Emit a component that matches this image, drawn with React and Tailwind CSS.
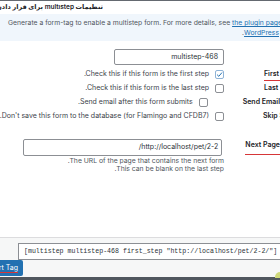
const font = "font-['Inter','DejaVu_Sans',sans-serif]";

const steps = [
  { text: ".Check this if this form is the first step", label: "First", pad: "pl-[40px]", checked: true, mark: true },
  { text: ".Check this if this form is the last step", label: "Last", pad: "pl-[40px]" },
  { text: ".Send email after this form submits", label: "Send Email", pad: "pl-[35px]" },
  { text: ".Don't save this form to the database (for Flamingo and CFDB7)", label: "Skip Save", pad: "pl-[39px]" },
];

const CheckBox = ({ checked }) => (
  <span
    className={`flex h-[9px] w-[9px] shrink-0 items-center justify-center rounded-[2px] border bg-white ${
      checked ? "border-[#8fb3d6]" : "border-[#8c8f94]"
    }`}
  >
    {checked && (
      <svg viewBox="0 0 10 10" className="h-[7px] w-[7px]">
        <path d="M1.5 5.2 L4 7.6 L8.6 2.2" fill="none" stroke="#2271b1" strokeWidth="1.4" />
      </svg>
    )}
  </span>
);

export default function App() {
  return (
    <div className={`relative flex h-[280px] w-[280px] flex-col overflow-hidden bg-white ${font}`}>
      {/* Modal title */}
      <div className="h-px shrink-0 bg-[#646970]" />
      <div className="flex h-[13px] shrink-0 items-center">
        <div
          dir="rtl"
          className="w-[103px] overflow-hidden whitespace-nowrap text-[6.5px] font-semibold leading-none text-[#1d2327]"
        >
          تنظیمات multistep برای قرار دادن در فرم
        </div>
      </div>

      {/* Notice */}
      <div className="flex h-[27px] shrink-0 flex-col bg-[#f0f6fc] pt-[4px] text-[6.8px] leading-[10px] text-[#50575e]">
        <p className="whitespace-nowrap pl-[8px]">
          Generate a form-tag to enable a multistep form. For more details, see{" "}
          <span className="text-[#2271b1] underline">the plugin page</span>
        </p>
        <p className="whitespace-nowrap pr-px text-right">
          .<span className="text-[#2271b1] underline">WordPress</span>
        </p>
      </div>

      {/* Fields */}
      <div className="flex h-[196px] shrink-0 flex-col pt-[8px] text-[7px] text-[#3c434a]">
        <div className="flex h-[16px] items-center">
          <div className="flex w-[224px] justify-end">
            <div className="flex h-[16px] w-[110px] items-center justify-end rounded-[2px] border border-[#8c8f94] pr-[5px] text-[7px] text-[#2c3338]">
              multistep-468
            </div>
          </div>
        </div>

        <div className="mt-[2px] flex flex-col">
          {steps.map((s) => (
            <div key={s.label} className="flex h-[14px] items-center">
              <div className="flex w-[224px] items-center justify-end gap-[6px] whitespace-nowrap">
                <span>{s.text}</span>
                <CheckBox checked={s.checked} />
              </div>
              <div className={`flex-1 whitespace-nowrap ${s.pad}`}>
                <span
                  className={`block font-semibold text-[#1d2327] ${
                    s.mark ? "-mb-[2px] border-b border-[#d63638] pb-[1px]" : ""
                  }`}
                >
                  {s.label}
                </span>
              </div>
            </div>
          ))}
        </div>

        <div className="mt-[16px] flex h-[17px] items-center">
          <div className="flex w-[224px] justify-end">
            <div className="flex h-[17px] w-[199px] items-center justify-end rounded-[2px] border border-[#8c8f94] pr-[3px] text-[7px] text-[#2c3338]">
              /http://localhost/pet/2-2
            </div>
          </div>
          <div className="flex-1 whitespace-nowrap pl-[23px]">
            <span className="block border-b border-[#d63638] pb-[3px] font-semibold text-[#1d2327]">
              Next Page
            </span>
          </div>
        </div>
        <div className="flex w-[224px] flex-col items-end pt-px text-[6.8px] leading-[7.5px] text-[#50575e]">
          <p>.The URL of the page that contains the next form</p>
          <p>.This can be blank on the last step</p>
        </div>
      </div>

      {/* Insert box */}
      <div className="flex h-[40px] shrink-0 flex-col border-t border-[#dcdcde] bg-[#f6f7f7] pt-[5px]">
        <div className="ml-[18px] flex h-[17px] w-[300px] items-center whitespace-nowrap border border-[#8c8f94] bg-white pl-[5px] font-['Liberation_Mono',monospace] text-[6.6px] text-[#2c3338]">
          [multistep multistep-468 first_step "http://localhost/pet/2-2/"]
        </div>
        <div className="flex">
          <button className="-ml-[20px] flex h-[16px] items-center rounded-[2px] bg-[#2271b1] px-[5px] text-[7px] text-white">
            <span className="border-b border-[#d63638] leading-[8px]">Insert Tag</span>
          </button>
        </div>
      </div>
      <div className="h-[3px] shrink-0 bg-[#50575e]" />
      <div className="absolute bottom-[2px] right-0 h-[6px] w-[5px] rounded-tl-full bg-[#cfd97a]" />
    </div>
  );
}
